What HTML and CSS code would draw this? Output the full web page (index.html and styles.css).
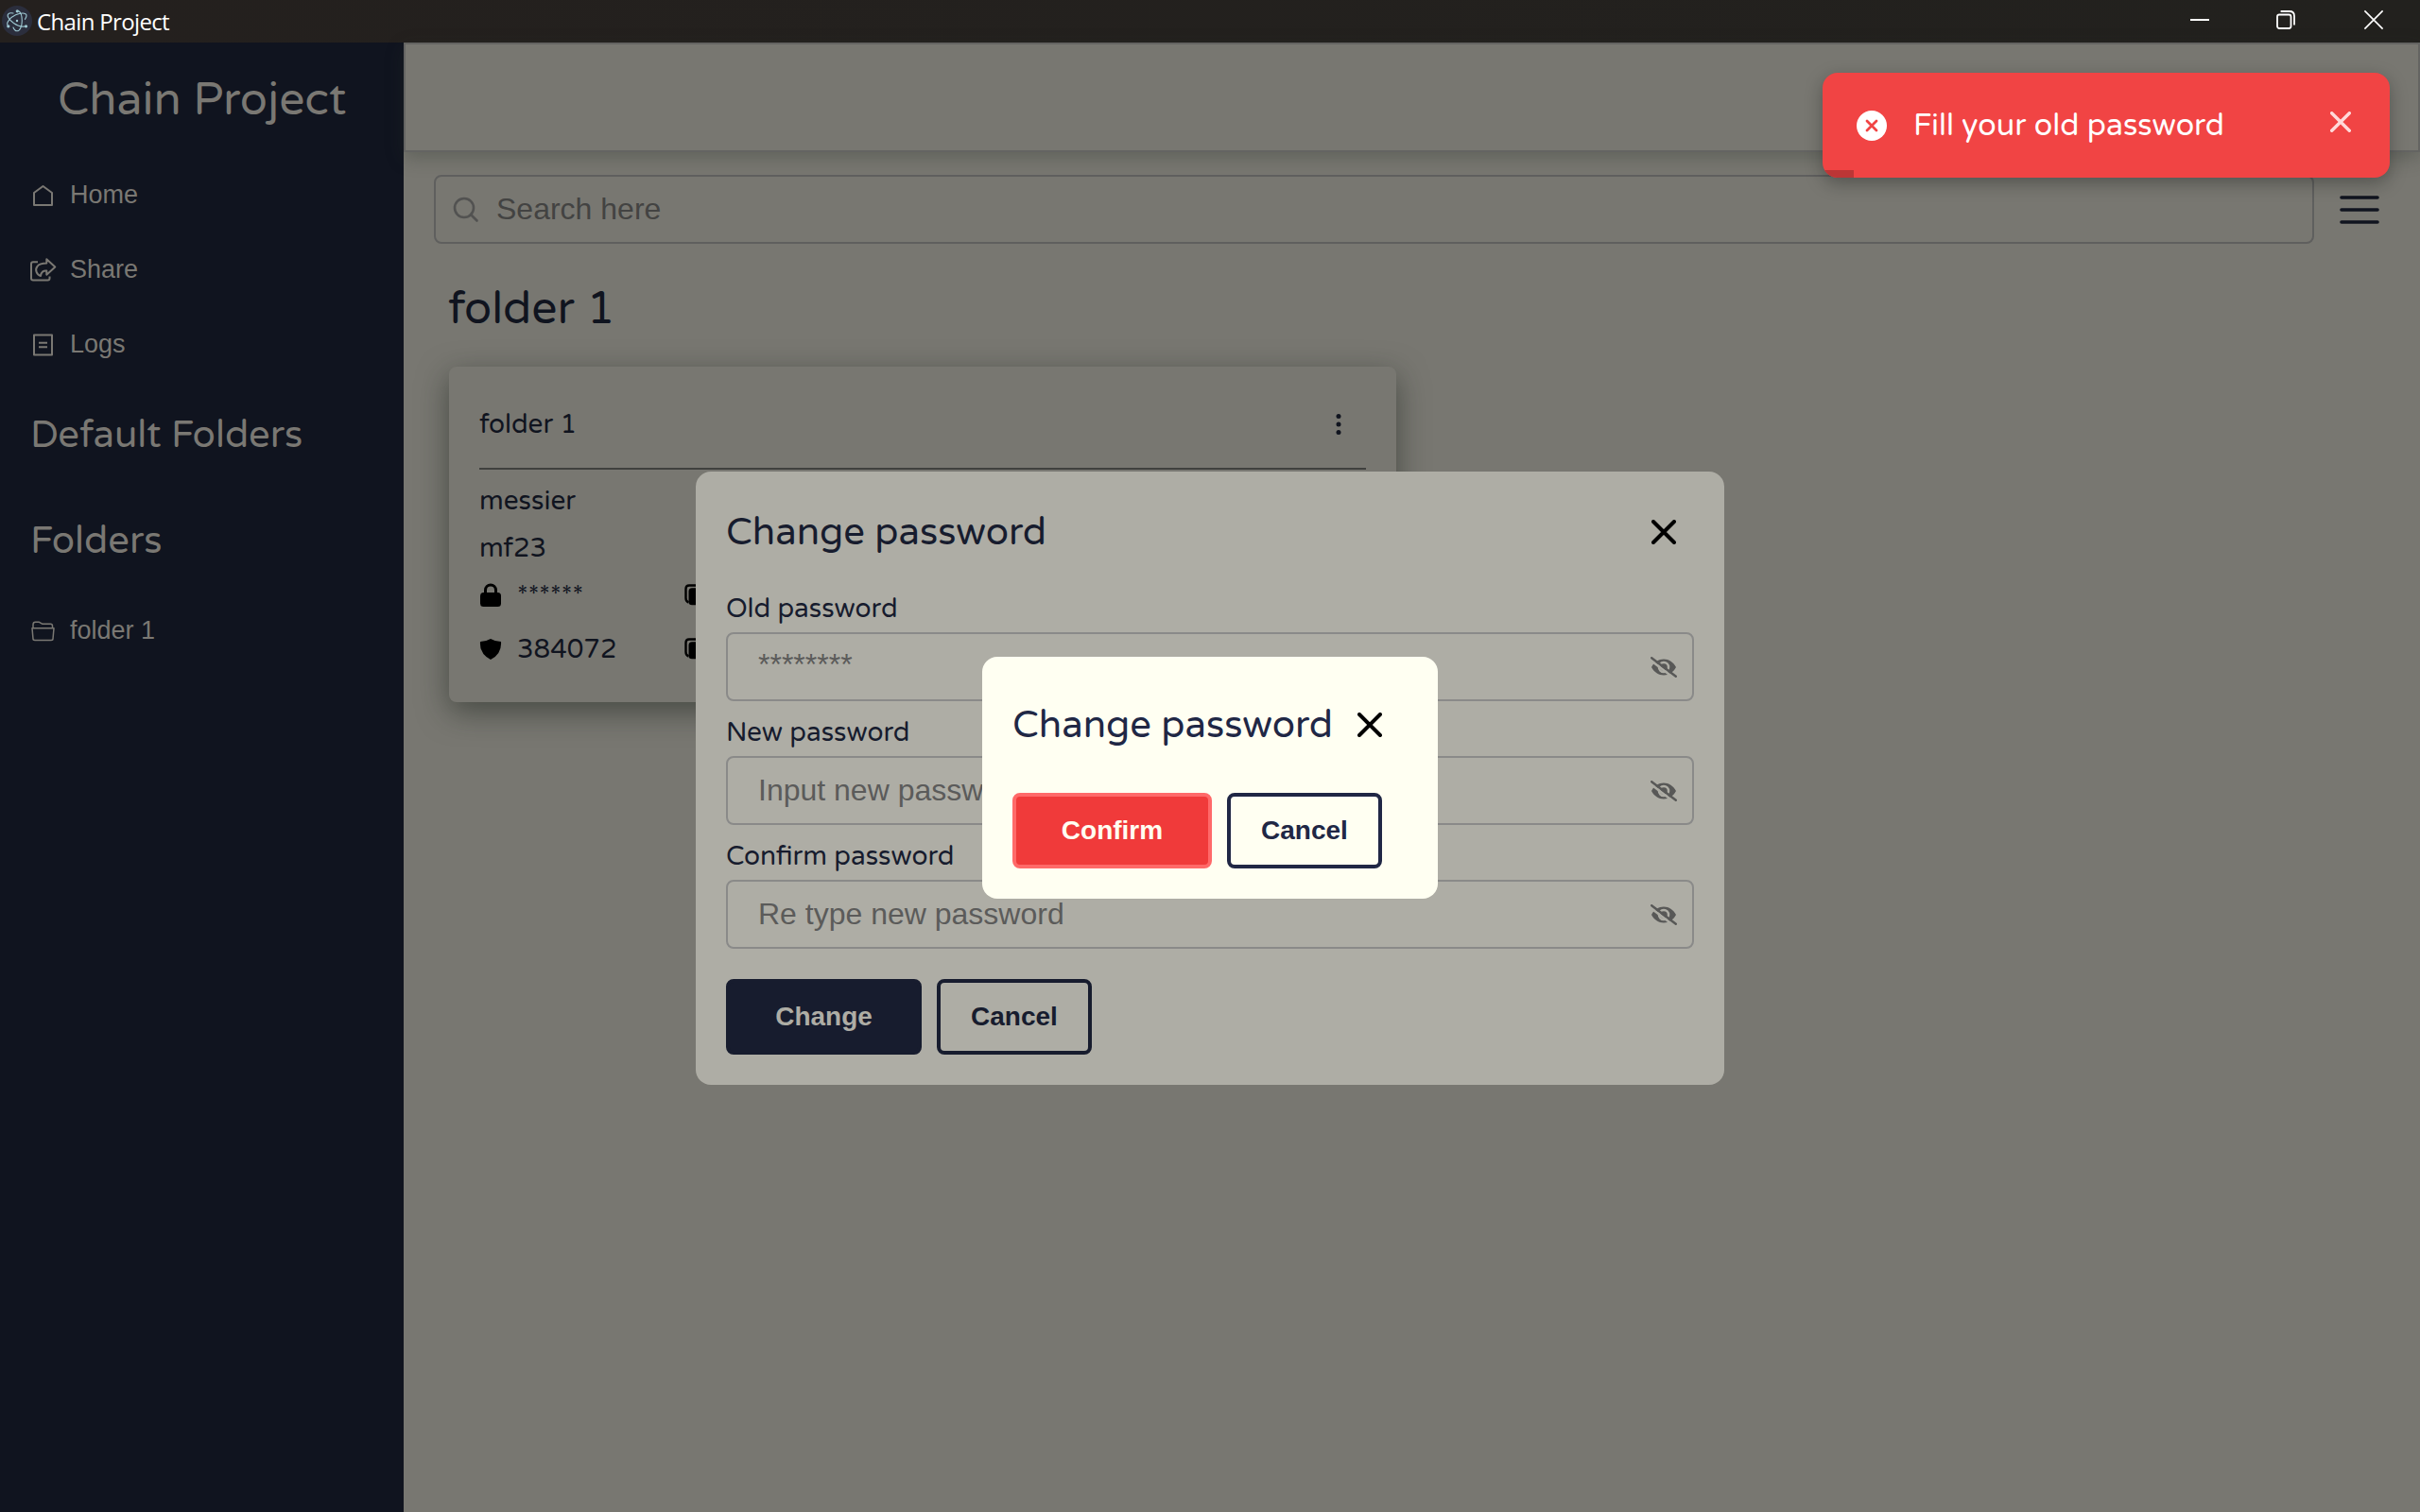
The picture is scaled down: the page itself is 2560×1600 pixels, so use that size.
FILE: index.html
```html
<!DOCTYPE html>
<html lang="en">
<head>
<meta charset="utf-8">
<title>Chain Project</title>
<link rel="stylesheet" href="styles.css">
</head>
<body>
<svg class="defs" width="0" height="0">
  <symbol id="eye-off" viewBox="0 0 28 22">
    <path fill="#585857" fill-rule="evenodd" d="M1 11C4 5.5 8.500 2.500 14 2.500S24 5.500 27 11C24 16.500 19.500 19.500 14 19.500S4 16.500 1 11ZM14 4.700a6.300 6.300 0 1 0 0 12.600a6.300 6.300 0 0 0 0-12.600Z"/>
    <circle cx="14" cy="11" r="3.800" fill="#585857"/>
    <path d="M0 3.600L25.500 23" stroke="#aeada5" stroke-width="2.600"/>
    <path d="M1.200 1.200L26.800 20.800" stroke="#585857" stroke-width="2.400" stroke-linecap="round"/>
  </symbol>
  <symbol id="cross" viewBox="0 0 26 26">
    <path d="M2 2L24 24M24 2L2 24" stroke="currentColor" stroke-width="4" stroke-linecap="round"/>
  </symbol>
  <symbol id="copy" viewBox="0 0 24 24">
    <path d="M4.500 19.500Q1.500 18.500 1.500 15V5Q1.500 1.500 5 1.500H15Q18 1.500 19 4" fill="none" stroke="#000" stroke-width="2.400"/>
    <rect x="4.500" y="4.200" width="18" height="18" rx="3.500"/>
  </symbol>
</svg>
<div class="window">
  <header class="titlebar">
    <svg class="logo" viewBox="0 0 32 32" width="32" height="32" fill="none" stroke="#9fc9d3" stroke-width="1.100" stroke-linecap="round">
      <circle cx="16" cy="16" r="16" fill="#2b2e3d" stroke="none"/>
      <path d="M6 20.500C4.500 17.500 9 12.500 14.500 9.800C20 7.300 25.500 7.500 26 10C26.200 11.300 25.600 12.800 24.500 14.300"/>
      <path d="M17.500 5.500C20 7 21.300 11.300 21.300 16C21.300 22 19 26.800 16 26.800C14.300 26.800 12.900 25.400 12 23"/>
      <path d="M25.500 21.500C22.500 22.800 17 21.500 12.500 18.500C7.500 15 5 10.700 6.700 8.800C7.800 7.700 9.900 7.500 12 8"/>
      <g fill="#9fc9d3" stroke="none"><circle cx="16" cy="16" r="1.200"/><circle cx="16.300" cy="5.800" r="1.600"/><circle cx="6.800" cy="21.800" r="1.600"/><circle cx="25.500" cy="21.800" r="1.600"/></g>
    </svg>
    <span class="titlebar-name">Chain Project</span>
    <div class="window-controls">
      <svg width="20" height="20"><path d="M0 10H20" stroke="#fff" stroke-width="2"/></svg>
      <svg width="20" height="20" fill="none" stroke="#fff" stroke-width="1.800"><rect x="1" y="4.500" width="14.500" height="14.500" rx="2.200"/><path d="M4.600 1H14Q19 1 19 6V15.500"/></svg>
      <svg width="20" height="20"><path d="M.4.400L19.600 19.600M19.600.4L.4 19.600" stroke="#fff" stroke-width="1.600"/></svg>
    </div>
  </header>
  <div class="body">
    <nav class="sidebar">
      <h1 class="brand">Chain Project</h1>
      <a class="nav-item"><svg class="nav-icon" viewBox="0 0 28 28"><path d="M4 24V11L13.500 4L23 11V24Z"/></svg>Home</a>
      <a class="nav-item"><svg class="nav-icon" viewBox="0 0 28 28"><path d="M8 5.300H3Q1 5.300 1 7.300V22.500Q1 24.500 3 24.500H18.500Q20.500 24.500 20.500 22.500V20.500"/><path d="M17.300 2.300L26.300 10.500L17.300 18.700V14.500C14.500 14 11.500 15.500 11 20C7 19 4.500 13.500 7.500 9.800C9.500 7.300 13 6.600 17.300 6.600Z"/></svg>Share</a>
      <a class="nav-item"><svg class="nav-icon" viewBox="0 0 28 28"><rect x="4" y="3.500" width="19" height="21"/><path d="M9 11.800H18M9 16.200H18"/></svg>Logs</a>
      <h2 class="group group-default">Default Folders</h2>
      <h2 class="group">Folders</h2>
      <a class="nav-item nav-folder"><svg class="nav-icon thin" viewBox="0 0 28 28"><path d="M3 10.500V7Q3 4.300 5.500 4.300H9.500L13 6.300H21.500Q23.500 6.300 23.500 8.500V10.500"/><path d="M2 10.700H25L24 22Q24 23.500 22 23.500H5Q3 23.500 3 22Z"/></svg>folder 1</a>
    </nav>
    <main class="main">
      <div class="topbar"></div>
      <div class="search-row">
        <div class="search"><svg width="28" height="28" fill="none" stroke="#525251" stroke-width="2.600" stroke-linecap="round"><circle cx="12" cy="12" r="10"/><path d="M19 19L25.500 25.500"/></svg><span>Search here</span></div>
        <svg class="burger" width="42" height="32" stroke="#10141f" stroke-width="3.600" stroke-linecap="round"><path d="M2 3H40M2 16H40M2 29H40"/></svg>
      </div>
      <h2 class="page-title">folder 1</h2>
      <section class="card">
        <div class="card-head"><span>folder 1</span><svg width="6" height="24" fill="#10141f"><circle cx="3" cy="3.500" r="2.500"/><circle cx="3" cy="12" r="2.500"/><circle cx="3" cy="20.500" r="2.500"/></svg></div>
        <p class="card-line">messier</p>
        <p class="card-line">mf23</p>
        <div class="secret secret-pass"><svg width="22" height="26"><path d="M5.500 12V7.500a5.500 5.500 0 0 1 11 0V12" fill="none" stroke="#000" stroke-width="3"/><rect y="10" width="22" height="15" rx="3.500"/></svg><span>******</span><svg class="copy" width="24" height="24"><use href="#copy"/></svg></div>
        <div class="secret"><svg width="22" height="26"><path d="M11 2Q16 5 22 5Q23 18 11 24Q-1 18 0 5Q6 5 11 2Z"/></svg><span>384072</span><svg class="copy" width="24" height="24"><use href="#copy"/></svg></div>
      </section>
    </main>
  </div>

  <section class="modal">
    <div class="modal-head"><h2>Change password</h2><svg class="close" width="26" height="26"><use href="#cross"/></svg></div>
    <label>Old password</label>
    <div class="field"><span class="masked">********</span><svg width="28" height="22"><use href="#eye-off"/></svg></div>
    <label>New password</label>
    <div class="field"><span>Input new password</span><svg width="28" height="22"><use href="#eye-off"/></svg></div>
    <label>Confirm password</label>
    <div class="field"><span>Re type new password</span><svg width="28" height="22"><use href="#eye-off"/></svg></div>
    <div class="actions"><button class="btn solid">Change</button><button class="btn outline">Cancel</button></div>
  </section>

  <section class="confirm">
    <div class="confirm-head"><h2>Change password</h2><svg width="26" height="26"><use href="#cross"/></svg></div>
    <div class="actions"><button class="btn danger">Confirm</button><button class="btn outline">Cancel</button></div>
  </section>

  <div class="toast">
    <svg class="toast-icon" width="32" height="32"><circle cx="16" cy="16" r="16" fill="#fff"/><path d="M11 11L21 21M21 11L11 21" stroke="#f14444" stroke-width="2.800" stroke-linecap="round"/></svg>
    <span class="toast-text">Fill your old password</span>
    <svg class="toast-close" width="22" height="22"><use href="#cross"/></svg>
    <div class="toast-progress"></div>
  </div>
</div>
</body>
</html>
```
FILE: styles.css
```css
* { box-sizing: border-box; margin: 0; padding: 0; }
body { width: 2560px; height: 1600px; overflow: hidden; }
svg { display: block; flex: none; overflow: visible; }
h1, h2 { font-weight: 400; }
.defs { position: absolute; }
.window {
  position: relative;
  width: 2560px; height: 1600px;
  display: flex; flex-direction: column;
  font-family: "Varela Round", "Noto Sans", sans-serif;
}
.titlebar {
  height: 45px; flex: none;
  display: flex; align-items: center;
  padding: 0 39px 0 2px;
  background: linear-gradient(90deg, #24201e, #22211e);
}
.logo { margin-top: -1px; }
.titlebar-name {
  margin: 0 0 0 5px;
  font: 24px/32px "Segoe UI", "Open Sans", sans-serif;
  letter-spacing: -0.65px; color: #fff;
}
.window-controls { display: flex; gap: 71px; margin: -3px 0 0 auto; }
.window-controls svg:nth-child(2) { margin-right: 2px; }
.body { flex: 1; display: flex; }

.sidebar {
  width: 427px; flex: none;
  background: #10141f; color: #7a7873;
  display: flex; flex-direction: column;
}
.brand { margin: 29px 0 28px 61px; font-size: 48px; line-height: 64px; }
.nav-item {
  height: 79px; padding-left: 32px;
  display: flex; align-items: center; gap: 14px;
  font: 27px/40px "Liberation Sans", Arial, sans-serif;
}
.nav-icon { width: 28px; height: 28px; margin-top: 2px; fill: none; stroke: #7a7873; stroke-width: 2; stroke-linejoin: round; }
.nav-icon.thin { stroke-width: 1.5; }
.group { margin-left: 32px; font-size: 40px; line-height: 56px; }
.group-default { margin-top: 29px; margin-bottom: 56px; }
.nav-folder { margin-top: 27px; }

.main { flex: 1; background: #787771; color: #10141f; }
.topbar { height: 116px; border: 2px solid #646462; box-shadow: 0 6px 18px rgba(40, 50, 40, .3); }
.search-row { display: flex; align-items: center; margin: 24px 43px 0 32px; gap: 27px; }
.search {
  flex: 1; height: 73px; border: 2px solid #5f5f5e; border-radius: 8px;
  display: flex; align-items: center; gap: 18px; padding-left: 18px;
  font: 32px/40px "Liberation Sans", Arial, sans-serif; color: #434342;
}
.search span, .field span { margin-bottom: 2px; }
.page-title { margin: 37px 0 0 47px; font-size: 48px; line-height: 64px; }
.card {
  width: 1002px; height: 355px; margin: 29px 0 0 48px; padding: 0 32px;
  border-radius: 8px; background: #787771;
  box-shadow: 0 10px 32px rgba(30, 36, 30, .55);
  font-size: 28px; line-height: 40px;
}
.card-head {
  height: 109px; padding: 14px 26px 0 0; border-bottom: 2px solid #40403e;
  display: flex; align-items: center; justify-content: space-between;
}
.card-head svg { margin-top: 1px; }
.card-line { height: 50px; padding-top: 13px; }
.card-line + .card-line { height: 58px; }
.secret { display: flex; align-items: center; height: 57px; padding-left: 1px; }
.secret-pass { margin-top: -4px; }
.secret span { width: 177px; margin-left: 17px; }

.modal {
  position: absolute; left: 736px; top: 499px;
  width: 1088px; height: 649px; padding: 32px 32px 0;
  border-radius: 16px; background: #aeada5; color: #171c2e;
}
.modal-head { display: flex; justify-content: space-between; align-items: center; padding-right: 19px; height: 64px; }
.modal h2, .confirm h2 { font-size: 40px; line-height: 56px; }
.modal-head .close { color: #000; }
.modal label { display: block; font-size: 28px; line-height: 40px; height: 58px; padding-top: 13px; }
.modal-head + label { margin-top: 16px; }
.modal .field {
  height: 73px; border: 2px solid #8a8a89; border-radius: 8px;
  display: flex; align-items: center; justify-content: space-between; padding: 0 16px 0 32px;
  font: 32px/40px "Liberation Sans", Arial, sans-serif; color: #5b5b5a;
}
.field .masked { margin-bottom: 6px; }
.actions { display: flex; gap: 16px; }
.modal .actions { margin-top: 32px; }
.btn {
  height: 80px; border-radius: 8px; border: 4px solid currentColor; background: none;
  font: bold 28px/40px "Liberation Sans", Arial, sans-serif;
}
.solid { width: 207px; background: #171c2e; border-color: #171c2e; color: #aeada5; }
.outline { width: 164px; color: #171c2e; }
.danger { width: 211px; background: #f03a3a; border-color: #ff6969; color: #fffff2; }
.confirm {
  position: absolute; left: 1039px; top: 695px;
  width: 482px; height: 256px; padding: 40px 32px 0;
  border-radius: 16px; background: #fffff2; color: #202745;
}
.confirm .outline { color: #202745; }
.confirm-head { display: flex; align-items: center; justify-content: space-between; width: 391px; height: 64px; }
.confirm-head svg { color: #000; }
.confirm .actions { margin-top: 40px; }

.toast {
  position: absolute; left: 1928px; top: 77px; width: 600px; height: 111px;
  border-radius: 16px; overflow: hidden; background: #f14444; color: #fff;
  display: flex; align-items: center; padding: 0 41px 0 36px;
  box-shadow: 0 6px 18px rgba(20, 24, 20, .35);
}
.toast-text { margin-left: 28px; font-size: 32px; line-height: 44px; }
.toast-close { margin: -7px 0 0 auto; color: #ffdada; }
.toast-progress { position: absolute; left: 0; bottom: 0; width: 33px; height: 8px; background: #bc3636; }
```
